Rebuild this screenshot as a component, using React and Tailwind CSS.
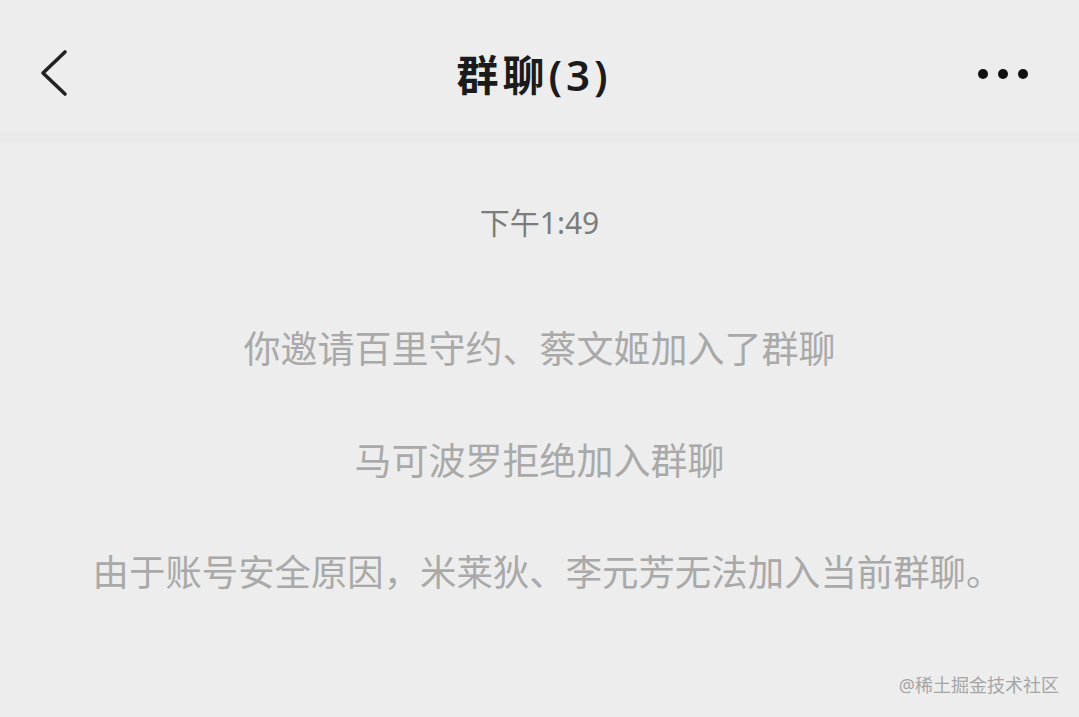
import React from 'react';

const font = { fontFamily: '"Noto Sans", "Noto Sans CJK SC", sans-serif' };

const App = () => {
  return (
    <div className="relative w-[1079px] h-[717px] bg-[#ededed] overflow-hidden" style={font}>
      {/* Header */}
      <div className="h-[132px] pt-4 px-[40px] flex items-center justify-between">
        <svg width="30" height="50" viewBox="0 0 30 50">
          <path d="M25 3 L3 24 L25 45" fill="none" stroke="#222" strokeWidth="3.6" strokeLinecap="round" strokeLinejoin="round" />
        </svg>
        <h1 className="text-[42px] font-semibold text-[#1b1b1b] tracking-[4px] ml-[20px]">群聊(3)</h1>
        <div className="flex items-center gap-[10px] mr-[11px]">
          <span className="w-[10px] h-[10px] rounded-full bg-[#111]" />
          <span className="w-[10px] h-[10px] rounded-full bg-[#111]" />
          <span className="w-[10px] h-[10px] rounded-full bg-[#111]" />
        </div>
      </div>
      <div className="h-[11px] bg-[#e9e9e9]" />

      {/* Messages */}
      <div className="flex flex-col items-center">
        <p className="mt-[60px] text-[30px] leading-[40px] text-[#7c7c7c]">下午1:49</p>
        <p className="mt-[82px] text-[37px] leading-[48px] text-[#a9a9a9]">你邀请百里守约、蔡文姬加入了群聊</p>
        <p className="mt-[64px] text-[37px] leading-[48px] text-[#a9a9a9]">马可波罗拒绝加入群聊</p>
        <p className="mt-[63px] pl-[16px] text-[36.4px] leading-[48px] text-[#a9a9a9]">由于账号安全原因，米莱狄、李元芳无法加入当前群聊。</p>
      </div>

      {/* Watermark */}
      <span className="absolute right-[20px] bottom-[18px] text-[18px] text-[#a5a5a5]">@稀土掘金技术社区</span>
    </div>
  );
};

export default App;
